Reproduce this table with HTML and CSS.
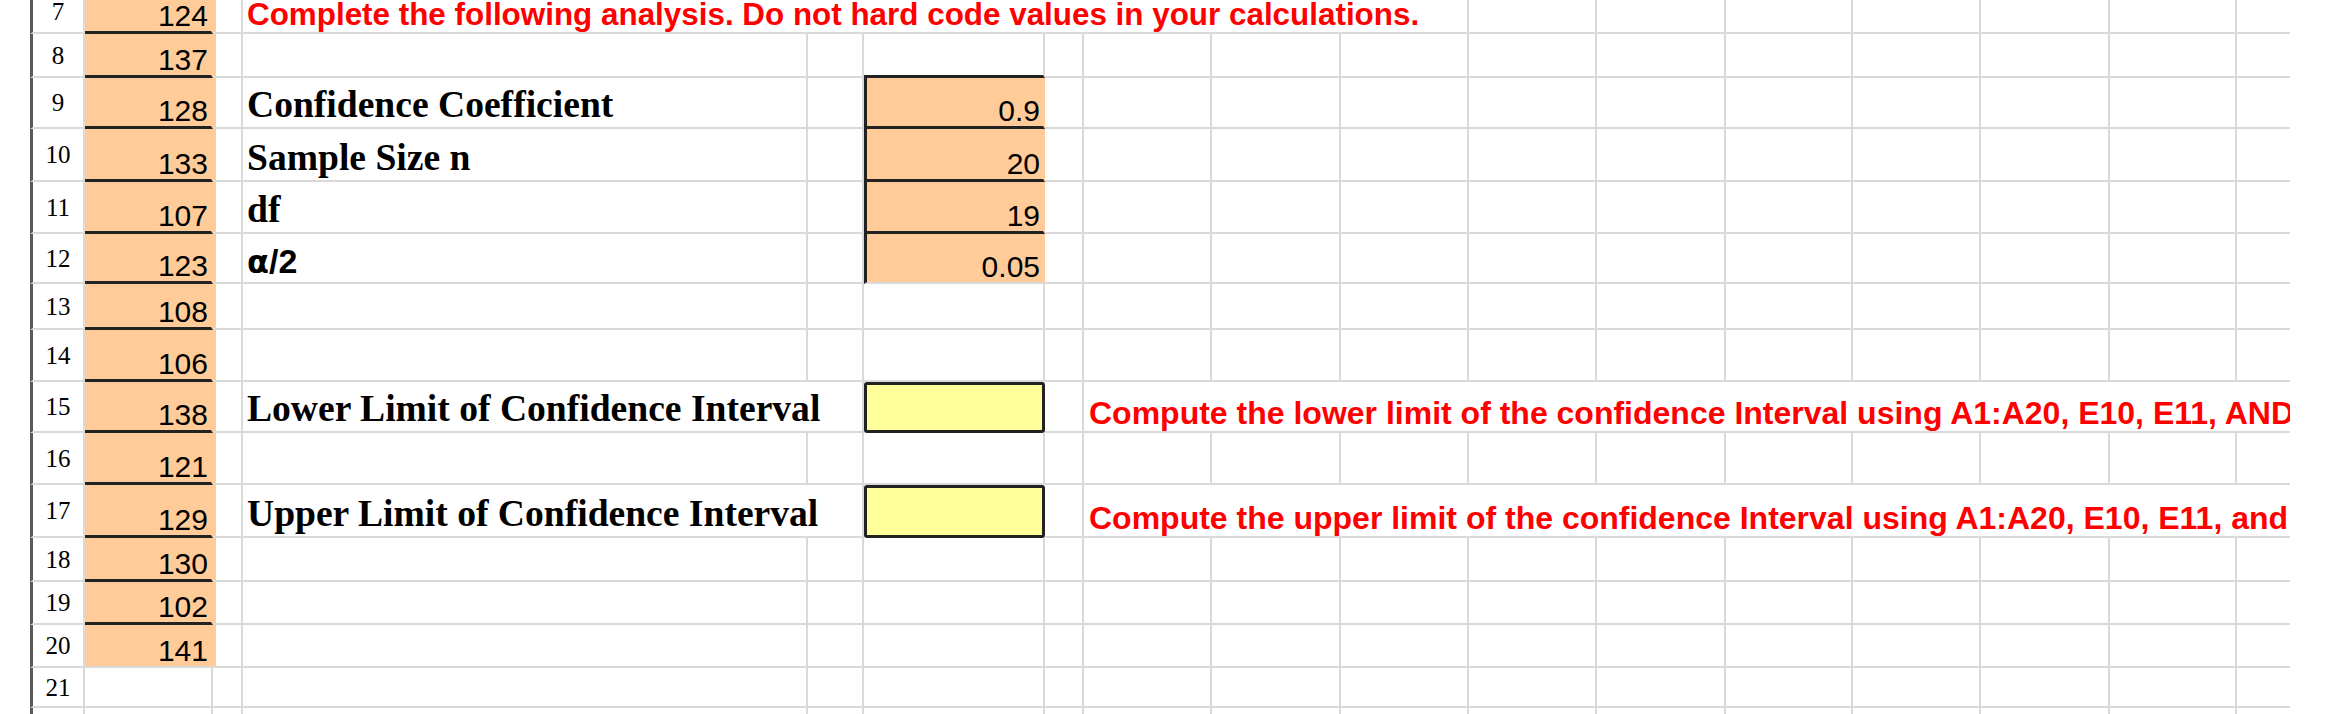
FILE: index.html
```html
<!DOCTYPE html>
<html lang="en">
<head>
<meta charset="utf-8">
<title>Confidence Interval</title>
<link rel="stylesheet" href="styles.css">
</head>
<body>
<div class="sheet">
  <div class="row r7">
    <div class="hd">7</div><div class="a bd">124</div><div></div>
    <div class="note n7">Complete the following analysis. Do not hard code values in your calculations.</div>
    <div></div><div></div><div></div><div></div><div></div><div></div><div class="last"></div>
  </div>
  <div class="row r8">
    <div class="hd">8</div><div class="a bd">137</div><div></div><div></div><div></div><div class="etop"></div><div></div>
    <div></div><div></div><div></div><div></div><div></div><div></div><div></div><div></div><div></div><div class="last"></div>
  </div>
  <div class="row r9">
    <div class="hd">9</div><div class="a bd">128</div><div></div><div class="lab">Confidence Coefficient</div><div></div><div class="eb bd">0.9</div><div></div>
    <div></div><div></div><div></div><div></div><div></div><div></div><div></div><div></div><div></div><div class="last"></div>
  </div>
  <div class="row r10">
    <div class="hd">10</div><div class="a bd">133</div><div></div><div class="lab">Sample Size n</div><div></div><div class="eb bd">20</div><div></div>
    <div></div><div></div><div></div><div></div><div></div><div></div><div></div><div></div><div></div><div class="last"></div>
  </div>
  <div class="row r11">
    <div class="hd">11</div><div class="a bd">107</div><div></div><div class="lab">df</div><div></div><div class="eb bd">19</div><div></div>
    <div></div><div></div><div></div><div></div><div></div><div></div><div></div><div></div><div></div><div class="last"></div>
  </div>
  <div class="row r12">
    <div class="hd">12</div><div class="a bd">123</div><div></div><div class="greek"><span class="alpha">α</span>/2</div><div></div><div class="eb">0.05</div><div></div>
    <div></div><div></div><div></div><div></div><div></div><div></div><div></div><div></div><div></div><div class="last"></div>
  </div>
  <div class="row r13">
    <div class="hd">13</div><div class="a bd">108</div><div></div><div></div><div></div><div></div><div></div>
    <div></div><div></div><div></div><div></div><div></div><div></div><div></div><div></div><div></div><div class="last"></div>
  </div>
  <div class="row r14">
    <div class="hd">14</div><div class="a bd">106</div><div></div><div></div><div></div><div></div><div></div>
    <div></div><div></div><div></div><div></div><div></div><div></div><div></div><div></div><div></div><div class="last"></div>
  </div>
  <div class="row r15">
    <div class="hd">15</div><div class="a bd">138</div><div></div><div class="lab span2">Lower Limit of Confidence Interval</div><div class="yel"></div><div></div>
    <div class="note wide last">Compute the lower limit of the confidence Interval using A1:A20, E10, E11, AND</div>
  </div>
  <div class="row r16">
    <div class="hd">16</div><div class="a bd">121</div><div></div><div></div><div></div><div></div><div></div>
    <div></div><div></div><div></div><div></div><div></div><div></div><div></div><div></div><div></div><div class="last"></div>
  </div>
  <div class="row r17">
    <div class="hd">17</div><div class="a bd">129</div><div></div><div class="lab span2">Upper Limit of Confidence Interval</div><div class="yel"></div><div></div>
    <div class="note wide last">Compute the upper limit of the confidence Interval using A1:A20, E10, E11, and</div>
  </div>
  <div class="row r18">
    <div class="hd">18</div><div class="a bd">130</div><div></div><div></div><div></div><div></div><div></div>
    <div></div><div></div><div></div><div></div><div></div><div></div><div></div><div></div><div></div><div class="last"></div>
  </div>
  <div class="row r19">
    <div class="hd">19</div><div class="a bd">102</div><div></div><div></div><div></div><div></div><div></div>
    <div></div><div></div><div></div><div></div><div></div><div></div><div></div><div></div><div></div><div class="last"></div>
  </div>
  <div class="row r20">
    <div class="hd">20</div><div class="a">141</div><div></div><div></div><div></div><div></div><div></div>
    <div></div><div></div><div></div><div></div><div></div><div></div><div></div><div></div><div></div><div class="last"></div>
  </div>
  <div class="row r21">
    <div class="hd">21</div><div></div><div></div><div></div><div></div><div></div><div></div>
    <div></div><div></div><div></div><div></div><div></div><div></div><div></div><div></div><div></div><div class="last"></div>
  </div>
  <div class="row r22">
    <div class="hd"></div><div></div><div></div><div></div><div></div><div></div><div></div>
    <div></div><div></div><div></div><div></div><div></div><div></div><div></div><div></div><div></div><div class="last"></div>
  </div>
</div>
</body>
</html>
```

FILE: styles.css
```css
* { box-sizing: border-box; }

html, body {
  margin: 0;
  padding: 0;
  background: #ffffff;
}

body {
  width: 2344px;
  height: 714px;
  overflow: hidden;
  font-family: "Liberation Sans", Arial, sans-serif;
  color: #000;
}

.sheet {
  margin: -10px 0 0 30px;
  width: 2260px;
  height: 724px;
  overflow: hidden;
}

.row {
  display: grid;
  grid-template-columns: 55px 128px 30px 565px 56px 181px 39px 128px 129px 128px 128px 129px 127px 128px 129px 127px 53px;
}

.r7 { height: 44px; }
.r8 { height: 44px; }
.r9 { height: 51px; }
.r10 { height: 53px; }
.r11 { height: 52px; }
.r12 { height: 50px; }
.r13 { height: 46px; }
.r14 { height: 52px; }
.r15 { height: 51px; }
.r16 { height: 52px; }
.r17 { height: 53px; }
.r18 { height: 44px; }
.r19 { height: 43px; }
.r20 { height: 43px; }
.r21 { height: 40px; }
.r22 { height: 16px; }

.row > div {
  border-right: 2px solid #dadada;
  border-bottom: 2px solid #dadada;
  display: flex;
  align-items: flex-end;
  min-width: 0;
  white-space: nowrap;
  overflow: hidden;
}

.row > .last { border-right: none; }

.row > .hd {
  border-left: 3px solid #5a5a5a;
  justify-content: center;
  align-items: center;
  font: 25px/1 "Liberation Serif", "Times New Roman", serif;
}

.row > .a {
  background: #ffcc99;
  border-right-color: #ffcc99;
  box-shadow: 3px 0 0 #ffcc99;
  overflow: visible;
  justify-content: flex-end;
  padding-right: 3px;
  font: 30px/1 "Liberation Sans", Arial, sans-serif;
}

.row > .bd { border-bottom: 3px solid #222; }

.row > .lab {
  font: bold 37.6px/1 "Liberation Serif", "Times New Roman", serif;
  padding: 0 0 3px 4px;
}

.row > .span2 { grid-column: span 2; }

.row > .greek {
  font: bold 34px/1 "Liberation Sans", Arial, sans-serif;
  padding: 0 0 4px 4px;
}

.alpha {
  font-family: "DejaVu Sans", "Liberation Sans", sans-serif;
  font-size: 32px;
}

.row > .note {
  color: #ff0000;
  font: bold 32px/1 "Liberation Sans", Arial, sans-serif;
  padding: 0 0 2px 5px;
}

.row > .n7 {
  grid-column: span 7;
  font-size: 31.4px;
  padding-left: 4px;
}

.row > .wide { grid-column: span 10; }

.row > .etop { border-bottom: 3px solid #222; }

.row > .eb {
  background: #ffcc99;
  border-left: 3px solid #222;
  border-right-color: #ffcc99;
  justify-content: flex-end;
  padding-right: 3px;
  font: 30px/1 "Liberation Sans", Arial, sans-serif;
}

.row > .eb.bd { border-bottom: 3px solid #222; }

.row > .yel {
  background: #ffff99;
  border: 3px solid #222;
  border-radius: 3px;
}
```
